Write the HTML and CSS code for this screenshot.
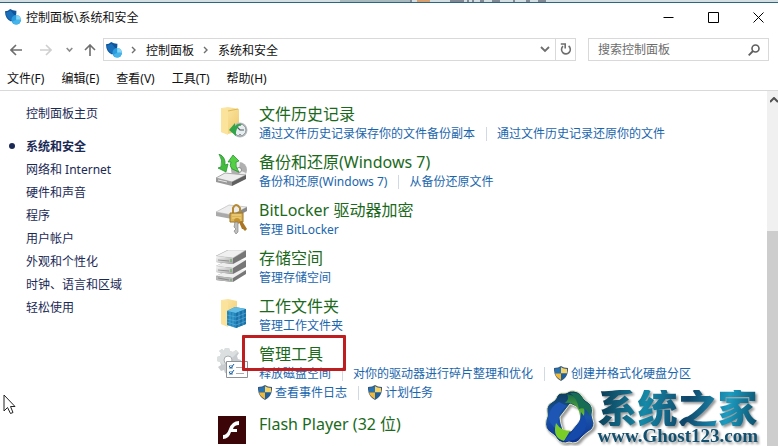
FILE: index.html
```
<!DOCTYPE html>
<html lang="zh-CN">
<head>
	<meta charset="utf-8">
	<title>控制面板\系统和安全</title>
	<link rel="stylesheet" href="styles.css">
</head>
<body>

	<!-- 公用图标 -->
	<svg class="defs" width="0" height="0" aria-hidden="true">
		<defs>
			<linearGradient id="metal" x1="0" y1="0" x2="1" y2="1">
				<stop offset="0" stop-color="#fafafa"/>
				<stop offset="1" stop-color="#a2a2a2"/>
			</linearGradient>
			<linearGradient id="folder" x1="0" y1="0" x2="1" y2="1">
				<stop offset="0" stop-color="#fdeaae"/>
				<stop offset="1" stop-color="#efc968"/>
			</linearGradient>
			<linearGradient id="ring" x1="0" y1="0" x2="0" y2="1">
				<stop offset="0" stop-color="#0d3d58"/>
				<stop offset="0.5" stop-color="#1b55a8"/>
				<stop offset="1" stop-color="#0b2f94"/>
			</linearGradient>
			<linearGradient id="leaf" x1="0" y1="0" x2="0" y2="1">
				<stop offset="0" stop-color="#186b48"/>
				<stop offset="1" stop-color="#83d72c"/>
			</linearGradient>
		</defs>
		<symbol id="security" viewBox="0 0 16 16">
			<path d="M0 2.2 Q3 2.2 5.2 0 Q8 2 11.4 1.8 Q12 9.5 6 12.6 Q0 9.5 0 2.2Z" fill="#0d559c"/>
			<path d="M1 3.4 Q4 3 5.5 1.4 L10 7 L6 11.4 Q1 8.5 1 3.4Z" fill="#1a6fba"/>
			<circle cx="11.2" cy="10.8" r="4.8" fill="#2a9bdd"/>
			<path d="M11.2 10.8 V6 A4.8 4.8 0 0 1 16 10.8Z" fill="#85d6f5"/>
			<path d="M7 13 Q11 10 15.8 11 Q15 15.3 11.2 15.6 Q8 15.5 7 13Z" fill="#45b4ea"/>
		</symbol>
		<symbol id="shield" viewBox="0 0 14 15">
			<path d="M7 0 Q9.500 2 14 2 Q14.500 11 7 15 Q-0.500 11 0 2 Q4.500 2 7 0Z" fill="#3d5a78"/>
			<path d="M7 1.200 V7.500 H1.100 Q0.900 5 1 2.900 Q4.800 2.800 7 1.200Z" fill="#2572b4"/>
			<path d="M7 1.200 Q9.200 2.800 13 2.900 Q13.100 5 12.900 7.500 H7Z" fill="#f6d365"/>
			<path d="M1.100 7.500 H7 V13.900 Q2 11.500 1.100 7.500Z" fill="#f1b936"/>
			<path d="M7 7.500 H12.900 Q12 11.500 7 13.900Z" fill="#1d609f"/>
		</symbol>
	</svg>

	<div class="window">

		<!-- 露出的后方窗口 -->
		<div class="behind">
			<div class="behind-tab"></div>
			<svg class="behind-marks" width="140" height="2" viewBox="0 0 140 2">
				<path d="M1 0V2M40 1H54M58 0V2M63 0V2M70 1H74M82 1H90M104 0V2M116 1H120M128 1H136" stroke="#334" fill="none"/>
				<path d="M7 1H20" stroke="#d8a070" stroke-width="2"/>
			</svg>
		</div>

		<div class="titlebar">
			<svg class="icon16"><use href="#security"/></svg>
			<span class="titlebar-text">控制面板\系统和安全</span>
			<div class="titlebar-controls">
				<button type="button" aria-label="最小化"><svg width="11" height="11"><path d="M0.500 5.500H10.500" stroke="#000"/></svg></button>
				<button type="button" aria-label="最大化"><svg width="11" height="11"><path d="M0.500 0.500H10.500V10.500H0.500Z" stroke="#000" fill="none"/></svg></button>
				<button type="button" aria-label="关闭"><svg width="11" height="11"><path d="M0.500 0.500L10.500 10.500M10.500 0.500L0.500 10.500" stroke="#000"/></svg></button>
			</div>
		</div>

		<div class="nav">
			<button type="button" class="nav-btn" aria-label="后退"><svg width="12" height="12"><path d="M12 6H1.500M6 1L1 6L6 11" stroke="#6e6e6e" stroke-width="1.600" fill="none"/></svg></button>
			<button type="button" class="nav-btn" aria-label="前进"><svg width="12" height="12"><path d="M0 6H10.500M6 1L11 6L6 11" stroke="#cfcfcf" stroke-width="1.600" fill="none"/></svg></button>
			<button type="button" class="nav-btn nav-btn-recent" aria-label="最近的位置"><svg width="7" height="6"><path d="M0.700 1L3.500 4L6.300 1" stroke="#8b8b8b" stroke-width="1.600" fill="none"/></svg></button>
			<button type="button" class="nav-btn nav-btn-up" aria-label="上移"><svg width="12" height="12"><path d="M6 12V1.500M1 6L6 1L11 6" stroke="#6e6e6e" stroke-width="1.600" fill="none"/></svg></button>

			<div class="address">
				<svg class="icon16"><use href="#security"/></svg>
				<svg class="crumb-arrow" viewBox="0 0 5 8"><path d="M1 1L4 4L1 7" stroke="#6e6e6e" stroke-width="1.400" fill="none"/></svg>
				<a href="#">控制面板</a>
				<svg class="crumb-arrow" viewBox="0 0 5 8"><path d="M1 1L4 4L1 7" stroke="#6e6e6e" stroke-width="1.400" fill="none"/></svg>
				<a href="#">系统和安全</a>
				<button type="button" class="address-drop" aria-label="以前的位置"><svg width="10" height="7"><path d="M1 1L5 5L9 1" stroke="#6e6e6e" stroke-width="1.800" fill="none"/></svg></button>
				<button type="button" class="address-refresh" aria-label="刷新"><svg width="12" height="13"><path d="M3 3.200A4.400 4.400 0 1 0 8.600 3" stroke="#6e6e6e" stroke-width="1.600" fill="none"/><path d="M0.800 1H5.200V5.400" stroke="#6e6e6e" stroke-width="1.600" fill="none"/></svg></button>
			</div>

			<div class="search">
				<input type="text" placeholder="搜索控制面板" aria-label="搜索控制面板">
				<svg width="12" height="12"><circle cx="7.500" cy="4.500" r="3.500" stroke="#5f5f5f" stroke-width="1.600" fill="none"/><path d="M5 7L0.700 11.300" stroke="#5f5f5f" stroke-width="1.800"/></svg>
			</div>
		</div>

		<div class="menubar">
			<button type="button">文件(F)</button>
			<button type="button">编辑(E)</button>
			<button type="button">查看(V)</button>
			<button type="button">工具(T)</button>
			<button type="button">帮助(H)</button>
		</div>

		<div class="body">

			<div class="side">
				<a href="#" class="side-home">控制面板主页</a>
				<ul>
					<li class="current"><a href="#">系统和安全</a></li>
					<li><a href="#">网络和 Internet</a></li>
					<li><a href="#">硬件和声音</a></li>
					<li><a href="#">程序</a></li>
					<li><a href="#">用户帐户</a></li>
					<li><a href="#">外观和个性化</a></li>
					<li><a href="#">时钟、语言和区域</a></li>
					<li><a href="#">轻松使用</a></li>
				</ul>
			</div>

			<div class="main">

				<div class="item">
					<svg class="item-icon" viewBox="0 0 32 32">
						<path d="M5 2L12 1L23 3V25L12 28L5 26Z" fill="url(#folder)"/>
						<path d="M5 2L12 5V29L5 26Z" fill="#fbe39c"/>
						<path d="M12 5L22 3" stroke="#e0b957"/>
						<circle cx="24" cy="24" r="7.500" fill="#b9bec1"/>
						<circle cx="24" cy="24" r="6" fill="#e8eef0" stroke="#8b9397"/>
						<path d="M20 20L24 24H28M24 19V20M24 28V29M19 24H20" stroke="#4e5b64" stroke-width="1.200" fill="none"/>
						<path d="M13 24L19 17V20Q23 17 26 18Q21 20 20 26L20 30Z" fill="#32a54a"/>
					</svg>
					<div class="item-text">
						<a href="#" class="item-title">文件历史记录</a>
						<div class="tasks"><a href="#">通过文件历史记录保存你的文件备份副本</a><a href="#">通过文件历史记录还原你的文件</a></div>
					</div>
				</div>

				<div class="item">
					<svg class="item-icon" viewBox="0 0 32 32">
						<circle cx="23" cy="16" r="8" fill="#b0b0b0"/>
						<path d="M23 16L16 12A8 8 0 0 1 24 8ZM23 16L30 19A8 8 0 0 1 24 24Z" fill="#ededed"/>
						<circle cx="23" cy="16" r="2.500" fill="#fff" stroke="#8c8c8c"/>
						<path d="M0 24L9 19L30 21L16 28Z" fill="#ededed" stroke="#aaa"/>
						<path d="M0 24L16 28V32L0 28Z" fill="#999"/>
						<path d="M16 28L30 21V25L16 32Z" fill="#606060"/>
						<path d="M2 26L11 28" stroke="#e7e7e7"/>
						<path d="M3 0Q10 3 9 11L12 10L10 18L2 14L5 13Q7 6 3 0Z" fill="#41bd3b" stroke="#198b25" stroke-width="0.700"/>
						<path d="M12 8L17 1L23 7L20 8Q19 13 23 18L16 15Q13 12 15 8Z" fill="#55cf43" stroke="#198b25" stroke-width="0.700"/>
					</svg>
					<div class="item-text">
						<a href="#" class="item-title">备份和还原(Windows 7)</a>
						<div class="tasks"><a href="#">备份和还原(Windows 7)</a><a href="#">从备份还原文件</a></div>
					</div>
				</div>

				<div class="item">
					<svg class="item-icon" viewBox="0 0 32 32">
						<path d="M0 10L13 3L31 5L16 13Z" fill="#eee" stroke="#bbb" stroke-width="0.700"/>
						<path d="M0 10L16 13V17L0 14Z" fill="#aaa"/>
						<path d="M16 13L31 5V9L16 17Z" fill="#888"/>
						<path d="M17 12V6Q20 0 24 6V12" stroke="#b78b33" stroke-width="2" fill="none"/>
						<path d="M14 11H27V20H14Z" fill="#dbb457" stroke="#9c7224"/>
						<path d="M16 13H25M16 16H25" stroke="#f4d788"/>
						<circle cx="21" cy="19" r="3" fill="#c5922e"/>
						<path d="M19 20H22V30L20 32L18 29L20 27L18 25Z" fill="#bfc0bd" stroke="#777" stroke-width="0.600"/>
						<path d="M23 20L26 19L31 27L29 29L27 27L26 27Z" fill="#aa7624"/>
					</svg>
					<div class="item-text">
						<a href="#" class="item-title">BitLocker 驱动器加密</a>
						<div class="tasks"><a href="#">管理 BitLocker</a></div>
					</div>
				</div>

				<div class="item">
					<svg class="item-icon" viewBox="0 0 32 32">
						<path d="M0 26L12 20H30V24L17 32L0 30Z" fill="#777"/>
						<path d="M0 26L12 20H30L17 28Z" fill="#eee"/>
						<path d="M0 26L17 28V32L0 30Z" fill="#b7b7b7"/>
						<path d="M0 16L12 10H30V17L17 24L0 22Z" fill="#777"/>
						<path d="M0 16L12 10H30L17 18Z" fill="#eee"/>
						<path d="M0 16L17 18V24L0 22Z" fill="url(#metal)"/>
						<path d="M0 6L12 0H30V7L17 14L0 12Z" fill="#777"/>
						<path d="M0 6L12 0H30L17 8Z" fill="#f0f0f0" stroke="#bbb" stroke-width="0.500"/>
						<path d="M0 6L17 8V14L0 12Z" fill="url(#metal)"/>
						<path d="M2 10L13 11M2 20L13 21M2 28L13 30" stroke="#777" stroke-width="0.700"/>
						<path d="M15 9V12M15 19V22M15 29V31" stroke="#58a851"/>
					</svg>
					<div class="item-text">
						<a href="#" class="item-title">存储空间</a>
						<div class="tasks"><a href="#">管理存储空间</a></div>
					</div>
				</div>

				<div class="item">
					<svg class="item-icon" viewBox="0 0 32 32">
						<path d="M5 2L12 1L21 3V25L12 28L5 26Z" fill="url(#folder)"/>
						<path d="M5 2L12 5V29L5 26Z" fill="#fbe39c"/>
						<path d="M11 13L19 9L30 11V26L20 30L11 27Z" fill="#2286bd"/>
						<path d="M11 13L19 9L30 11L20 15Z" fill="#62bce3"/>
						<path d="M20 15L30 11V26L20 30Z" fill="#1971a8"/>
						<path d="M11 17L20 19L30 15M11 21L20 23L30 19M11 24L20 27L30 23M14 14V28M17 15V29M23 14V29M27 12V27" stroke="#5fb2da" stroke-width="0.600" fill="none"/>
					</svg>
					<div class="item-text">
						<a href="#" class="item-title">工作文件夹</a>
						<div class="tasks"><a href="#">管理工作文件夹</a></div>
					</div>
				</div>

				<div class="item">
					<svg class="item-icon" viewBox="0 0 32 32">
						<path d="M9 2H13L14 5L17 6L20 4L23 7L21 10L22 13L25 14V18L22 19L21 22L23 25L19 28L16 26L13 28L9 27L8 24L5 25L2 21L5 19L4 16L1 15V11L4 10L5 7L3 5L6 3L8 5Z" fill="#c9ccce"/>
						<path d="M9 2H13L14 5L17 6L20 4L22 6L17 11L7 19L4 16L1 15V11L4 10L5 7L3 5L6 3L8 5Z" fill="#dcdfe0"/>
						<circle cx="12" cy="14" r="4" fill="#fff" stroke="#a9adaf"/>
						<path d="M10.500 15.500H31.500V31.500H10.500Z" fill="#fff" stroke="#8d9296"/>
						<path d="M13.500 19.500H16.500V22.500H13.500ZM13.500 25.500H16.500V28.500H13.500Z" fill="#e7f1fa" stroke="#9cb5cb"/>
						<path d="M13 20L15 22L18 18M13 26L15 28L18 24" stroke="#1464ae" fill="none"/>
						<path d="M20 21.500H28M20 27.500H28" stroke="#aaa"/>
					</svg>
					<div class="item-text">
						<a href="#" class="item-title item-title-marked">管理工具</a>
						<div class="tasks"><a href="#">释放磁盘空间</a><a href="#">对你的驱动器进行碎片整理和优化</a><a href="#"><svg class="shield"><use href="#shield"/></svg>创建并格式化硬盘分区</a></div>
						<div class="tasks"><a href="#"><svg class="shield"><use href="#shield"/></svg>查看事件日志</a><a href="#"><svg class="shield"><use href="#shield"/></svg>计划任务</a></div>
					</div>
				</div>

				<div class="item item-flash">
					<svg class="item-icon" viewBox="0 0 32 32">
						<path d="M2 0H30V28H2Z" fill="#3c0508"/>
						<path d="M23 5V9Q18 9 17 13H21V16H15Q13 23 7 23V19Q11 19 13 13Q16 5 23 5Z" fill="#fff"/>
					</svg>
					<div class="item-text">
						<a href="#" class="item-title">Flash Player (32 位)</a>
					</div>
				</div>

			</div>

			<div class="scrollbar">
				<div class="scrollbar-up"><svg width="8" height="6"><path d="M0 5L4 1L8 5" stroke="#505050" stroke-width="2" fill="none"/></svg></div>
				<div class="scrollbar-space"></div>
				<div class="scrollbar-thumb"></div>
			</div>
		</div>

		<svg class="cursor" width="13" height="21" viewBox="0 0 13 21"><path d="M1 1V17L4.500 13.500L7.500 19.500L10 18.500L7.500 12.500H12Z" fill="#fff" stroke="#222"/></svg>

		<div class="brand">
			<svg width="50" height="56" viewBox="0 0 50 56">
				<path fill-rule="evenodd" d="M16 3Q21 4 25 1Q33 0 37 6Q39 10 43 12Q49 16 47 25Q48 30 49 33Q49 39 43 42Q39 45 36 48Q32 55 24 52Q17 55 12 49Q10 45 6 43Q-1 39 1 30Q3 26 2 22Q1 15 7 12Q11 10 12 6Q14 3 16 3ZM25 14L15 27Q15 32 18 40L26 41L36 29Q37 24 34 18Z" fill="url(#ring)" stroke="#e7e9bc"/>
				<path d="M22 4Q33 6 38 15Q42 25 35 32Q36 18 28 14Q24 12 20 13Q25 9 22 4Z" fill="url(#leaf)"/>
				<path d="M34 19Q32 8 25 3Q34 2 37 7Q39 12 44 14Q48 19 45 26Q41 16 34 19Z" fill="#176d54"/>
				<path d="M3 28Q6 15 14 12L22 16Q13 22 13 32L16 40Q8 40 3 28Z" fill="#1d56b4"/>
				<path d="M11 33Q16 41 25 41L19 51Q7 48 11 33Z" fill="#7acd27"/>
				<path d="M19 51Q27 43 34 32Q36 28 36 22Q44 31 40 40Q33 51 24 51Z" fill="#1549aa"/>
			</svg>
			<div class="brand-text">
				<div class="brand-name">系统之家</div>
				<div class="brand-url">www.Ghost123.com</div>
			</div>
		</div>
	</div>

</body>
</html>
```
FILE: styles.css
```
* {
	box-sizing: border-box;
}

body {
	margin: 0px;
	background: #fff;
	color: #111;
	font-size: 12px;
	font-family: "Noto Sans", "Noto Sans CJK SC", sans-serif;
}

a {
	color: inherit;
	text-decoration: none;
}

button {
	margin: 0px;
	padding: 0px;
	border: none;
	background: none;
	color: inherit;
	font: inherit;
}

svg {
	display: block;
	flex: none;
}

.defs {
	position: absolute;
}

.window {
	position: relative;
	display: flex;
	flex-direction: column;
	height: 100vh;
	overflow: hidden;
}

.icon16 {
	width: 16px;
	height: 16px;
}

/* 顶部边缘 */
.behind {
	display: flex;
	flex: none;
	height: 3px;
	padding-left: 340px;
	background: #d3dfe3;
	border-bottom: 1px solid #2c6681;
}

.behind-tab {
	width: 70px;
	background: #a9babf;
}

.titlebar {
	display: flex;
	flex: none;
	align-items: center;
	height: 28px;
	padding-left: 5px;
}

.titlebar-text {
	flex: 1;
	padding-left: 5px;
}

.titlebar-controls {
	display: flex;
	height: 100%;
	margin-right: -3px;
}

.titlebar-controls button {
	display: flex;
	align-items: center;
	justify-content: center;
	width: 45px;
}

/* 导航栏 */
.nav {
	display: flex;
	flex: none;
	padding: 7px 9px 7px 1px;
}

.nav-btn {
	display: flex;
	align-items: center;
	justify-content: center;
	width: 30px;
}

.nav-btn-recent {
	width: 16px;
}

.nav-btn-up {
	width: 26px;
}

.address {
	display: flex;
	flex: 1;
	align-items: center;
	height: 23px;
	padding-left: 2px;
	border: 1px solid #d9d9d9;
}

.crumb-arrow {
	width: 5px;
	height: 8px;
	margin: 0px 10px 0px 9px;
}

.address button {
	display: flex;
	align-items: center;
	justify-content: center;
	width: 20px;
	height: 100%;
}

.address .address-drop {
	margin-left: auto;
}

.address .address-refresh {
	border-left: 1px solid #d9d9d9;
}

.search {
	display: flex;
	align-items: center;
	width: 181px;
	height: 23px;
	margin-left: 12px;
	padding: 0px 8px 0px 9px;
	border: 1px solid #d9d9d9;
}

.search input {
	flex: 1;
	min-width: 0px;
	padding: 0px;
	border: none;
	outline: none;
	background: none;
	font: inherit;
}

.search input::placeholder {
	color: #6d6d6d;
}

.menubar {
	display: flex;
	flex: none;
	gap: 17px;
	padding-left: 7px;
	line-height: 22px;
	border-bottom: 1px solid #d9d9d9;
}

/* 内容区 */
.body {
	display: flex;
	flex: 1;
	min-height: 0px;
}

.side {
	flex: none;
	width: 216px;
	padding: 11px 0px 0px 26px;
	color: #1b2a55;
	line-height: 23px;
}

.side ul {
	margin: 10px 0px 0px;
	padding: 0px;
	list-style: none;
}

.side .current {
	font-weight: bold;
}

.side .current::before {
	content: "";
	float: left;
	width: 6px;
	height: 6px;
	margin: 8px 0px 0px -17px;
	border-radius: 50%;
	background: #1b2a55;
}

.main {
	flex: 1;
	min-width: 0px;
	padding-top: 13px;
}

.item {
	display: flex;
	gap: 11px;
	margin-bottom: 9px;
}

.item-icon {
	width: 32px;
	height: 32px;
	margin-top: 2px;
}

.item-title {
	display: inline-block;
	vertical-align: top;
	color: #1b6a1b;
	font-size: 16px;
	line-height: 20px;
}

/* 红框标记 */
.item-title-marked {
	position: relative;
}

.item-title-marked::after {
	content: "";
	position: absolute;
	top: -9px;
	right: -23px;
	bottom: -7px;
	left: -17px;
	border: 3px solid #bf1e20;
	border-radius: 1px;
}

.tasks {
	display: flex;
	height: 19px;
	line-height: 19px;
	color: #1a66ad;
	white-space: nowrap;
}

.tasks a {
	display: flex;
	align-items: center;
}

.tasks a + a::before {
	content: "";
	width: 1px;
	height: 14px;
	margin: 0px 10px 0px 11px;
	background: #cfdae4;
}

.shield {
	width: 14px;
	height: 15px;
	margin: 0px 3px 0px -1px;
}

.item-flash {
	margin-top: 12px;
}

/* 滚动条 */
.scrollbar {
	display: flex;
	flex: none;
	flex-direction: column;
	width: 11px;
	background: #f0f0f0;
}

.scrollbar-up {
	padding: 6px 0px 5px 3px;
}

.scrollbar-space {
	flex: 4;
}

.scrollbar-thumb {
	flex: 7;
	background: #cdcdcd;
}

.cursor {
	position: absolute;
	left: 3px;
	bottom: 31px;
}

/* 右下角水印 */
.brand {
	position: absolute;
	right: 20px;
	bottom: 0px;
	display: flex;
	gap: 3px;
	align-items: center;
	filter: drop-shadow(2px 2px 1px rgba(0, 0, 0, 0.4));
}

.brand-name {
	background: linear-gradient(100deg, #0c3850, #1689a8 30%, #0f4568 55%, #1c9cc0 80%, #0c4a66);
	-webkit-background-clip: text;
	background-clip: text;
	color: transparent;
	font-size: 40px;
	font-weight: 900;
	line-height: 36px;
}

.brand-url {
	color: #12506f;
	font-family: "Liberation Serif", serif;
	font-size: 19px;
	font-weight: bold;
	line-height: 20px;
}
```
